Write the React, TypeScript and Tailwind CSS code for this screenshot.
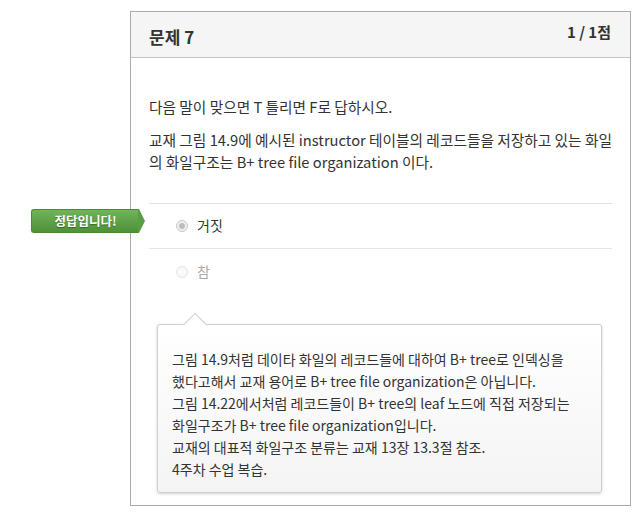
import React from 'react';

const font = { fontFamily: '"Noto Sans CJK KR", "Noto Sans", sans-serif' };

const AnswerRow = ({ label, selected, correct, last = false }: { label: string; selected?: boolean; correct?: boolean; last?: boolean }) => (
  <div className={`relative flex items-center h-[45px] pl-[27px] ${last ? '' : 'border-b border-[#e6e6e6]'}`}>
    {correct && (
      <div className="absolute left-[-118px] top-[5px] flex items-center">
        <div className="h-[24px] w-[108px] flex items-center justify-center rounded-l-[3px] bg-gradient-to-b from-[#71b35a] to-[#4f9139] border border-[#4a8a36] border-r-0 text-white text-[12.5px] font-bold [text-shadow:0_1px_1px_rgba(0,0,0,0.35)]">
          정답입니다!
        </div>
        <svg width="7" height="24" viewBox="0 0 7 24" className="-ml-px">
          <path d="M0 0 L1 0 L7 12 L1 24 L0 24 Z" fill="#5a9e43" />
        </svg>
      </div>
    )}
    <span className={`w-[12px] h-[12px] rounded-full border ${selected ? 'border-[#c8c8c8] bg-[#f0f0f0]' : 'border-[#e4e4e4] bg-[#fafafa]'} flex items-center justify-center`}>
      {selected && <span className="w-[6px] h-[6px] rounded-full bg-[#bdbdbd]" />}
    </span>
    <span className={`ml-[9px] -mt-[2px] text-[14px] ${selected ? 'text-[#333]' : 'text-[#aaa]'}`}>{label}</span>
  </div>
);

export default function App() {
  return (
    <div className="bg-white w-[642px] h-[520px] pt-[11px] pl-[130px]" style={font}>
      <div className="w-[501px] h-[495px] border border-[#aaaaaa] bg-white">
        <div className="h-[46px] bg-[#f5f5f5] border-b border-[#c4c4c4] flex items-start justify-between pl-[18px] pr-[19px]">
          <h2 className="mt-[13px] text-[17px] font-bold text-[#333] leading-[24px]">문제 7</h2>
          <span className="mt-[10px] text-[15px] font-bold text-[#333] leading-[20px]">1 / 1점</span>
        </div>

        <div className="px-[18px] pt-[38px] text-[14px] leading-[22px] text-[#333]">
          <p className="mb-[11px] text-[14.7px]">다음 말이 맞으면 T 틀리면 F로 답하시오.</p>
          <p className="mb-[30px] whitespace-nowrap text-[14.7px]">
            교재 그림 14.9에 예시된 instructor 테이블의 레코드들을 저장하고 있는 화일
            <br />
            의 화일구조는 B+ tree file organization 이다.
          </p>

          <div className="border-t border-[#e0e0e0]">
            <AnswerRow label="거짓" selected correct />
            <AnswerRow label="참" last />
          </div>

          <div className="relative mt-[30px] ml-[8px] w-[445px] rounded-[3px] border border-[#cfcfcf] bg-gradient-to-b from-white to-[#f4f4f4] shadow-[0_1px_3px_rgba(0,0,0,0.18)] pl-[14px] pt-[23px] pb-[12px] text-[14px] leading-[22px] text-[#333] whitespace-nowrap">
            <span className="absolute left-[29px] top-[-9px] w-[16px] h-[16px] rotate-45 bg-white border-l border-t border-[#cfcfcf]" />
            그림 14.9처럼 데이타 화일의 레코드들에 대하여 B+ tree로 인덱싱을
            <br />
            했다고해서 교재 용어로 B+ tree file organization은 아닙니다.
            <br />
            그림 14.22에서처럼 레코드들이 B+ tree의 leaf 노드에 직접 저장되는
            <br />
            화일구조가 B+ tree file organization입니다.
            <br />
            교재의 대표적 화일구조 분류는 교재 13장 13.3절 참조.
            <br />
            4주차 수업 복습.
          </div>
        </div>
      </div>
    </div>
  );
}
